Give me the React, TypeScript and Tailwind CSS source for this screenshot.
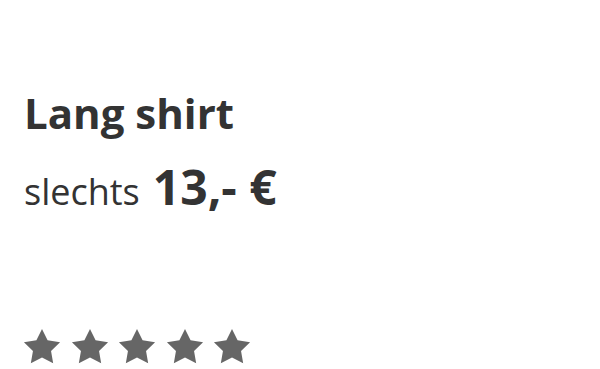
function Star() {
  // sharp five-point star, outer radius 19, inner ~9.5
  const pts: string[] = [];
  for (let i = 0; i < 10; i++) {
    const r = i % 2 === 0 ? 19 : 9.5;
    const a = (Math.PI / 5) * i - Math.PI / 2;
    pts.push(`${(19 + r * Math.cos(a)).toFixed(2)},${(19 + r * Math.sin(a)).toFixed(2)}`);
  }
  return (
    <svg viewBox="0 0 38 35" className="w-[38px] h-[35px]" fill="currentColor">
      <polygon points={pts.join(' ')} />
    </svg>
  );
}

export default function App() {
  return (
    <div className="w-[600px] h-[369px] bg-white overflow-hidden pl-6 pt-[92px] text-[#333]" style={{ fontFamily: '"Open Sans", sans-serif' }}>
      <h2 className="text-[42px] font-bold leading-none">Lang shirt</h2>
      <div className="flex items-baseline gap-[13px] mt-[29px]">
        <span className="text-[36px] leading-none">slechts</span>
        <span className="text-[48px] font-bold leading-none">13,- €</span>
      </div>
      <div className="flex gap-[9.5px] mt-[118px] text-[#666] -ml-[1px]">
        {[0, 1, 2, 3, 4].map((i) => (
          <Star key={i} />
        ))}
      </div>
    </div>
  );
}
